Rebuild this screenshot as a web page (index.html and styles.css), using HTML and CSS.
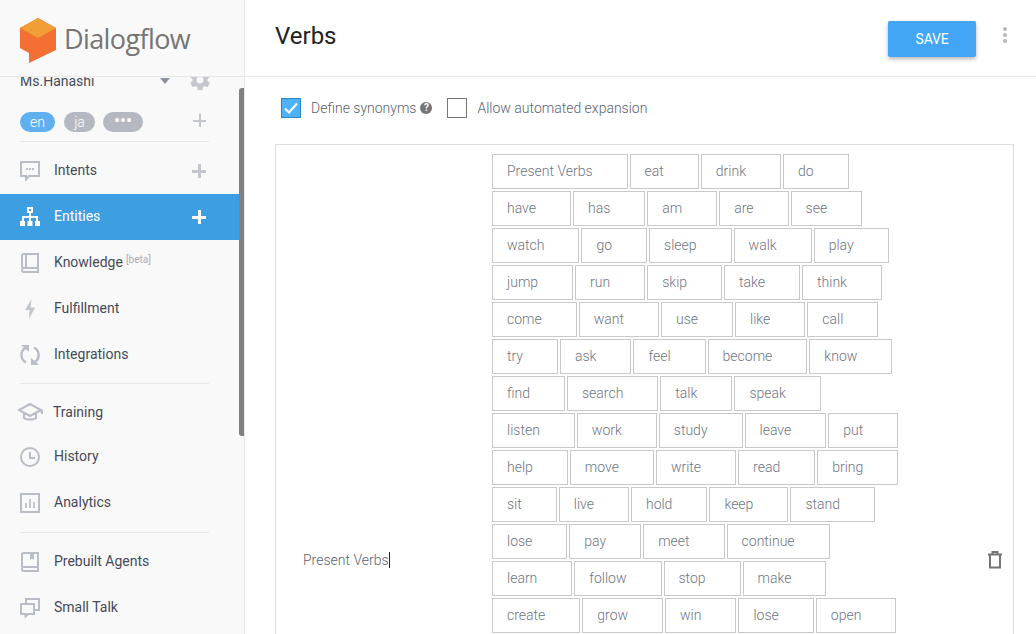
FILE: index.html
```html
<!DOCTYPE html>
<html lang="en">
<head>
<meta charset="utf-8">
<title>Verbs - Dialogflow</title>
<link rel="stylesheet" href="styles.css">
</head>
<body>
<div class="app">
  <aside class="sidebar">
    <div class="logo">
      <svg class="logo-mark" width="38" height="46" viewBox="0 0 38 46">
        <path fill="#f36f32" d="M18 0 36 10V32L9 45V35L0 30V10Z"/>
        <path fill="#f29e36" d="M0 10 18 0 36 10 18 20Z"/>
      </svg>
      <span class="logo-text">Dialogflow</span>
    </div>
    <div class="side-scroll">
      <div class="side-inner">
        <div class="agent">
          <span class="agent-name">Ms.Hanashi</span>
          <span class="caret"></span>
          <svg class="gear" width="24" height="24" viewBox="0 0 24 24"><path fill="#c3c6cd" d="M19.4 13c.1-.3.1-.7.1-1s0-.7-.1-1l2.1-1.6c.2-.2.2-.4.1-.6l-2-3.5c-.1-.2-.4-.3-.6-.2l-2.5 1c-.5-.4-1.1-.7-1.7-1l-.4-2.6c0-.3-.2-.4-.5-.4h-4c-.3 0-.5.1-.5.4l-.4 2.6c-.6.3-1.200.6-1.700 1l-2.500-1c-.2-.1-.5 0-.6.2l-2 3.500c-.1.2-.1.4.1.6L4.600 11c-.1.3-.1.700-.1 1s0 .7.1 1l-2.100 1.600c-.2.2-.2.4-.1.6l2 3.500c.1.2.4.3.6.2l2.500-1c.5.4 1.100.7 1.700 1l.4 2.600c0 .3.2.4.5.4h4c.3 0 .5-.1.5-.4l.4-2.600c.6-.3 1.200-.6 1.700-1l2.500 1c.2.1.5 0 .6-.2l2-3.500c.1-.2.1-.4-.1-.6zM12 15.500a3.500 3.500 0 1 1 0-7 3.500 3.500 0 0 1 0 7z"/></svg>
        </div>
        <div class="langs">
          <span class="lang lang-on">en</span>
          <span class="lang">ja</span>
          <span class="lang lang-more">•••</span>
          <span class="plus plus-lang"></span>
        </div>
        <hr class="rule rule-top">
        <nav class="nav">
          <a class="item">
            <svg class="ico" width="20" height="20" viewBox="0 0 20 20"><path fill="none" stroke="#b9bdc6" stroke-width="2" d="M1 1H19V15H9L6 18.500V15H1Z"/><path fill="#b9bdc6" d="M6 7h2v2H6zM9 7h2v2H9zM12 7h2v2h-2z"/></svg>
            <span class="label">Intents</span><span class="plus plus-nav"></span>
          </a>
          <a class="item item-on">
            <svg class="ico" width="20" height="20" viewBox="0 0 20 20"><path fill="none" stroke="#fff" stroke-width="2" d="M8 1h4v4H8zM10 5v5M3 14v-4H17v4M10 10v4"/><path fill="#fff" d="M0 14h5v5H0zM7.500 14h5v5h-5zM15 14h5v5h-5z"/></svg>
            <span class="label">Entities</span><span class="plus plus-nav"></span>
          </a>
          <a class="item">
            <svg class="ico" width="20" height="20" viewBox="0 0 20 20"><path fill="none" stroke="#b9bdc6" stroke-width="2" d="M2 15V2.500C2 1.700 2.700 1 3.500 1H18V19H3.500C2.700 19 2 18.300 2 17.500S2.700 15 3.500 15H18M6 1V15"/></svg>
            <span class="label">Knowledge</span><sup class="beta">[beta]</sup>
          </a>
          <a class="item">
            <svg class="ico" width="20" height="20" viewBox="0 0 20 20"><path fill="#c3c6cd" d="M11.500 0 5 11H9.500L9 20 15 8.500H10.500Z"/></svg>
            <span class="label">Fulfillment</span>
          </a>
          <a class="item">
            <svg class="ico" width="20" height="20" viewBox="0 0 20 20"><path fill="none" stroke="#b9bdc6" stroke-width="2.500" d="M6 17.500A8.500 8.500 0 0 1 5 3H9M14 2.500A8.500 8.500 0 0 1 15 17H11"/><path fill="#b9bdc6" d="M1 0H9V7ZM19 20H11V13Z"/></svg>
            <span class="label">Integrations</span>
          </a>
          <hr class="rule">
          <a class="item item-train">
            <svg class="ico ico-cap" width="26" height="20" viewBox="0 0 26 20"><path fill="none" stroke="#b9bdc6" stroke-width="2" d="M13 2 2 8l11 6 11-6zM7 11v5c2 2 10 2 12 0v-5M25 8v4"/></svg>
            <span class="label">Training</span>
          </a>
          <a class="item">
            <svg class="ico" width="20" height="20" viewBox="0 0 20 20"><circle cx="10" cy="10" r="9" fill="none" stroke="#b9bdc6" stroke-width="2"/><path fill="none" stroke="#b9bdc6" stroke-width="2" d="M10 5V11H15"/></svg>
            <span class="label">History</span>
          </a>
          <a class="item">
            <svg class="ico" width="20" height="20" viewBox="0 0 20 20"><path fill="none" stroke="#b9bdc6" stroke-width="2" d="M1 1H19V19H1Z"/><path fill="#c3c6cd" d="M5 10h2v5H5zM9 6h2v9H9zM13 9h2v6h-2z"/></svg>
            <span class="label">Analytics</span>
          </a>
          <hr class="rule rule-low">
          <a class="item">
            <svg class="ico" width="20" height="20" viewBox="0 0 20 20"><path fill="none" stroke="#b9bdc6" stroke-width="2" d="M2 15V2.500C2 1.700 2.700 1 3.500 1H18V19H3.500C2.700 19 2 18.300 2 17.500S2.700 15 3.500 15H18"/><path fill="#b9bdc6" d="M10 1h4v7l-2-1.500L10 8z"/></svg>
            <span class="label">Prebuilt Agents</span>
          </a>
          <a class="item">
            <svg class="ico" width="20" height="20" viewBox="0 0 20 20"><path fill="none" stroke="#b9bdc6" stroke-width="2" d="M1 6H14V16H8L5.500 18.500V16H1ZM6 6V1H19V12H14"/></svg>
            <span class="label">Small Talk</span>
          </a>
        </nav>
      </div>
      <div class="thumb"></div>
    </div>
  </aside>
  <main class="main">
    <header class="top">
      <h1 class="title">Verbs</h1>
      <button class="save">SAVE</button>
      <span class="dots"><i></i><i></i><i></i></span>
    </header>
    <div class="content">
      <div class="options">
        <span class="check check-on"><svg width="14" height="12" viewBox="0 0 14 12"><path fill="none" stroke="#fff" stroke-width="2" d="M1 6.500 5 10.500 13 1.500"/></svg></span>
        <span class="opt">Define synonyms</span>
        <span class="help">?</span>
        <span class="check"></span>
        <span class="opt">Allow automated expansion</span>
      </div>
      <div class="entity">
        <div class="ref"><span class="ref-text">Present Verbs</span></div>
        <div class="chips">
          <span class="chip">Present Verbs</span><span class="chip">eat</span><span class="chip">drink</span><span class="chip">do</span>
          <span class="chip">have</span><span class="chip">has</span><span class="chip">am</span><span class="chip">are</span><span class="chip">see</span>
          <span class="chip">watch</span><span class="chip">go</span><span class="chip">sleep</span><span class="chip">walk</span><span class="chip">play</span>
          <span class="chip">jump</span><span class="chip">run</span><span class="chip">skip</span><span class="chip">take</span><span class="chip">think</span>
          <span class="chip">come</span><span class="chip">want</span><span class="chip">use</span><span class="chip">like</span><span class="chip">call</span>
          <span class="chip">try</span><span class="chip">ask</span><span class="chip">feel</span><span class="chip">become</span><span class="chip">know</span>
          <span class="chip">find</span><span class="chip">search</span><span class="chip">talk</span><span class="chip">speak</span>
          <span class="chip">listen</span><span class="chip">work</span><span class="chip">study</span><span class="chip">leave</span><span class="chip">put</span>
          <span class="chip">help</span><span class="chip">move</span><span class="chip">write</span><span class="chip">read</span><span class="chip">bring</span>
          <span class="chip">sit</span><span class="chip">live</span><span class="chip">hold</span><span class="chip">keep</span><span class="chip">stand</span>
          <span class="chip">lose</span><span class="chip">pay</span><span class="chip">meet</span><span class="chip">continue</span>
          <span class="chip">learn</span><span class="chip">follow</span><span class="chip">stop</span><span class="chip">make</span>
          <span class="chip">create</span><span class="chip">grow</span><span class="chip">win</span><span class="chip">lose</span><span class="chip">open</span>
        </div>
        <svg class="trash" width="14" height="18" viewBox="0 0 14 18"><path fill="none" stroke="#757575" stroke-width="2" d="M2 4.500V16.500H12V4.500M0 3.500H14M4.500 3V1H9.500V3"/></svg>
      </div>
    </div>
  </main>
</div>
</body>
</html>
```
FILE: styles.css
```css
* { box-sizing: border-box; }
html, body { margin: 0; height: 100%; overflow: hidden; background: #fff; }
body { font-family: Roboto, "Liberation Sans", sans-serif; font-size: 14px; color: #454a59; }
.app { display: flex; height: 634px; }

.sidebar { width: 245px; flex: none; background: #f9f9f9; border-right: 1px solid #e8e8e8; display: flex; flex-direction: column; }
.logo { height: 77px; flex: none; border-bottom: 1px solid #e8e8e8; display: flex; align-items: flex-start; padding: 18px 0 0 20px; background: #f9f9f9; }
.logo-text { font-family: "Open Sans", Roboto, sans-serif; font-size: 27px; color: #757575; margin: 1px 0 0 6px; line-height: 40px; letter-spacing: -0.6px; }
.side-scroll { flex: 1; position: relative; overflow: hidden; }
.side-inner { margin-top: -10px; }
.thumb { position: absolute; right: 0; top: 11px; width: 5px; height: 348px; background: #808080; border-radius: 3px 0 0 3px; }

.agent { height: 28px; display: flex; align-items: center; padding: 0 0 0 20px; }
.agent-name { width: 140px; }
.caret { width: 0; height: 0; border: 5px solid transparent; border-top: 6px solid #8c91a0; border-bottom: 0; margin-right: 18px; }
.gear { margin-top: -3px; }
.langs { height: 46px; display: flex; align-items: flex-end; padding: 0 0 9px 20px; gap: 9px; }
.lang { height: 20px; line-height: 20px; border-radius: 10px; background: #b4b8c1; color: #fff; font-size: 14px; font-weight: 300; width: 31px; text-align: center; }
.lang-on { background: #5fb0ee; width: 35px; }
.lang-more { width: 40px; margin-left: -1px; font-size: 18px; font-weight: 400; line-height: 18px; }
.plus { width: 14px; height: 14px; flex: none; margin-left: auto; margin-right: 38px; color: #c3c6cd; background: linear-gradient(currentColor, currentColor) center / 100% 2px no-repeat, linear-gradient(currentColor, currentColor) center / 2px 100% no-repeat; }
.plus-nav { background-size: 100% 3px, 3px 100%; }
.plus-lang { margin: 0 38px 5px auto; width: 13px; height: 13px; }
.rule { height: 1px; border: 0; background: #e6e6e6; margin: 5px 35px 5px 20px; flex: none; }
.rule-top { margin: 0 35px 0 20px; }
.rule-low { margin: 6px 35px 6px 20px; }
.nav { display: flex; flex-direction: column; padding-top: 6px; }
.item { height: 46px; display: flex; align-items: center; padding-left: 20px; flex: none; }
.item-on { background: #3d9fe2; color: #fff; margin-right: 5px; }
.item-on .plus { color: #fff; margin-right: 33px; }
.item-train { height: 44px; margin-top: 1px; }
.ico { flex: none; margin-right: 14px; }
.ico-cap { margin: 0 10px 0 -3px; }
.label { line-height: 20px; margin-bottom: 2px; }
.item-train .label { margin-bottom: 0; }
.beta { font-size: 10px; color: #a9adb8; margin: -7px 0 0 3px; }

.main { flex: 1; min-width: 0; display: flex; flex-direction: column; }
.top { height: 77px; flex: none; border-bottom: 1px solid #e8e8e8; display: flex; align-items: center; padding: 0 0 4px 30px; }
.title { font-size: 24px; font-weight: 400; margin: 0; color: #202124; }
.save { width: 88px; height: 36px; margin: 0 0 -5px auto; border: 0; border-radius: 2px; background: #42a5f5; color: #fff; font: 400 14px Roboto, sans-serif; letter-spacing: -0.2px; box-shadow: 0 2px 4px rgba(0,0,0,.3); }
.dots { width: 5px; display: flex; flex-direction: column; gap: 2px; margin: -3px 28px 0 27px; }
.dots i { width: 4px; height: 4px; border-radius: 50%; background: #b4b8c1; }

.content { padding: 21px 22px 0 30px; }
.options { display: flex; align-items: center; height: 20px; padding-left: 6px; color: #5b6270; font-weight: 300; }
.check { width: 20px; height: 20px; border: 1px solid #757575; flex: none; display: flex; align-items: center; justify-content: center; margin-right: 10px; }
.check-on { background: #4eb2f8; border-color: #2d86c9; }
.help { width: 12px; height: 12px; border-radius: 50%; background: #757575; color: #fff; font-size: 10px; font-weight: 700; line-height: 12px; text-align: center; margin: 0 15px 0 4px; }
.entity { margin-top: 26px; border: 1px solid #ddd; height: 832px; display: flex; align-items: center; }
.ref { width: 216px; flex: none; padding-left: 27px; color: #5b6270; font-weight: 300; }
.ref-text { border-right: 1px solid #202124; }
.chips { width: 410px; flex: none; align-self: flex-start; display: flex; flex-wrap: wrap; gap: 2px; padding-top: 9px; font-weight: 300; }
.chip { height: 35px; line-height: 33px; border: 1px solid #c8c8c8; padding: 0 34px 0 14px; color: #6f7585; }
.trash { margin-left: 86px; }
```
